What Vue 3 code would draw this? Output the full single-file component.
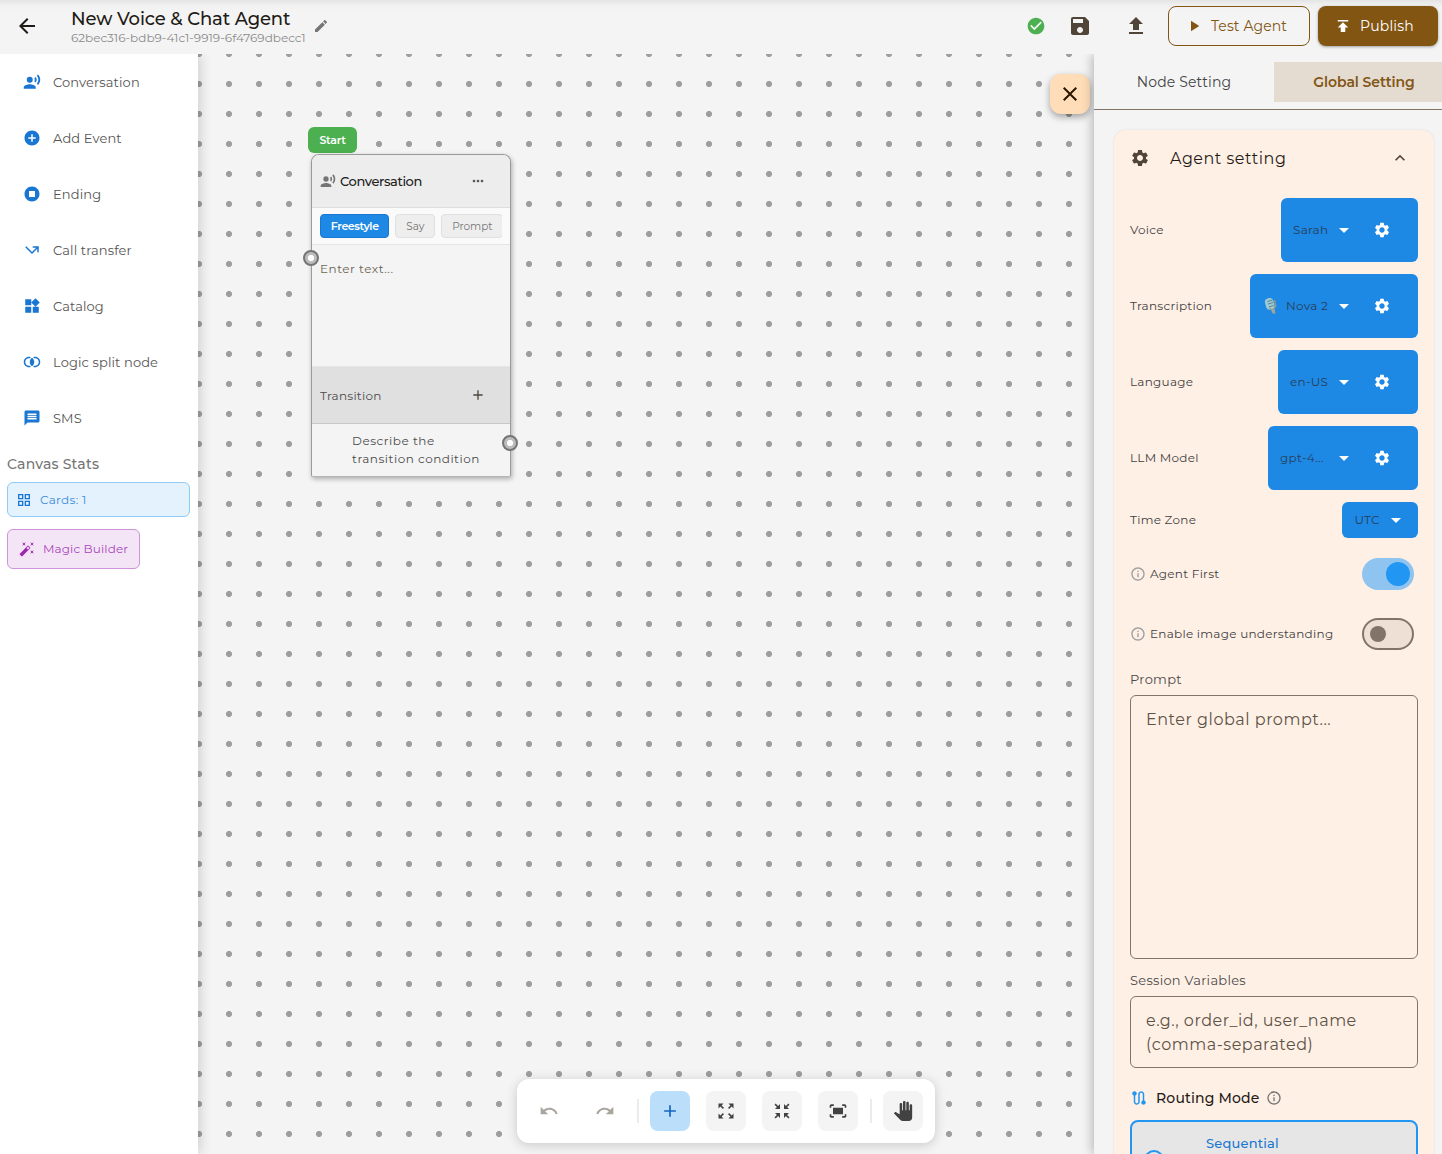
<template>
  <div class="app">
    <header class="topbar">
      <svg class="icon s24 back" viewBox="0 0 24 24"><path :d="icons.back" /></svg>
      <div class="titles">
        <div class="title">New Voice &amp; Chat Agent</div>
        <div class="agent-id">62bec316-bdb9-41c1-9919-6f4769dbecc1</div>
      </div>
      <svg class="icon s16 edit" viewBox="0 0 24 24"><path :d="icons.edit" /></svg>
      <div class="top-actions">
        <svg class="icon s20 saved" viewBox="0 0 24 24"><path :d="icons.check" /></svg>
        <svg class="icon s24 save" viewBox="0 0 24 24"><path :d="icons.save" /></svg>
        <svg class="icon s24 upload" viewBox="0 0 24 24"><path :d="icons.upload" /></svg>
        <button class="btn test">
          <svg class="icon s18" viewBox="0 0 24 24"><path :d="icons.play" /></svg>
          <span>Test Agent</span>
        </button>
        <button class="btn publish">
          <svg class="icon s18" viewBox="0 0 24 24"><path :d="icons.publish" /></svg>
          <span>Publish</span>
        </button>
      </div>
    </header>

    <div class="body">
      <aside class="sidebar">
        <div v-for="item in menu" :key="item.name" class="menu-item">
          <svg class="icon s18" viewBox="0 0 24 24"><path :d="icons[item.icon]" /></svg>
          <span>{{ item.name }}</span>
        </div>
        <div class="stats-title">Canvas Stats</div>
        <div class="cards-stat">
          <svg class="icon s16" viewBox="0 0 24 24"><path :d="icons.grid" /></svg>
          <span>Cards: 1</span>
        </div>
        <button class="magic">
          <svg class="icon s16" viewBox="0 0 24 24"><path :d="icons.magic" /></svg>
          <span>Magic Builder</span>
        </button>
      </aside>

      <main class="canvas">
        <div class="start">Start</div>
        <div class="node">
          <div class="node-head">
            <svg class="icon s16" viewBox="0 0 24 24"><path :d="icons.voice" /></svg>
            <span class="node-title">Conversation</span>
            <svg class="icon s16 more" viewBox="0 0 24 24"><path :d="icons.more" /></svg>
          </div>
          <div class="node-tabs">
            <div class="chips">
              <span class="chip active">Freestyle</span>
              <span class="chip say">Say</span>
              <span class="chip cut">Prompt</span>
            </div>
          </div>
          <div class="node-text">Enter text...</div>
          <div class="node-transition">
            <span>Transition</span>
            <svg class="icon s16" viewBox="0 0 24 24"><path :d="icons.add" /></svg>
          </div>
          <div class="node-condition">Describe the<br />transition condition</div>
          <i class="port in"></i>
          <i class="port out"></i>
        </div>

        <button class="close">
          <svg class="icon s24" viewBox="0 0 24 24"><path :d="icons.close" /></svg>
        </button>

        <div class="toolbar">
          <template v-for="tool in tools" :key="tool.icon">
            <i v-if="tool.split" class="divider"></i>
            <button class="tool" :class="tool.kind">
              <svg class="icon s20" viewBox="0 0 24 24"><path :d="icons[tool.icon]" /></svg>
            </button>
          </template>
        </div>
      </main>

      <aside class="panel">
        <div class="tabs">
          <div class="tab">Node Setting</div>
          <div class="tab active">Global Setting</div>
        </div>
        <section class="settings">
          <div class="settings-head">
            <svg class="icon s20" viewBox="0 0 24 24"><path :d="icons.settings" /></svg>
            <span class="settings-title">Agent setting</span>
            <svg class="icon s20" viewBox="0 0 24 24"><path :d="icons.less" /></svg>
          </div>

          <div v-for="row in rows" :key="row.label" class="row">
            <span class="label">{{ row.label }}</span>
            <div class="select" :class="{ small: !row.gear }" :style="{ width: row.width + 'px' }">
              <svg v-if="row.mic" class="mic" viewBox="0 0 14 18">
                <rect x="1.5" y="1" width="8.5" height="11.5" rx="3.5" transform="rotate(-14 6 7)" fill="#9ccbd6" />
                <path d="M3.5 4.5l5-1.5M4 7l5-1.5M5 10l4.5-1.5" stroke="#48707c" stroke-width="0.8" />
                <path d="M10.5 3l1.3 6-2.8 4-4-1.5" fill="none" stroke="#a89878" stroke-width="1.2" />
                <path d="M7 12.5l3.500-.5 1 4.500H8.500z" fill="#a0a69c" />
              </svg>
              <span class="value">{{ row.value }}</span>
              <svg class="icon s24" viewBox="0 0 24 24"><path :d="icons.down" /></svg>
              <span v-if="row.gear" class="gear">
                <svg class="icon s18" viewBox="0 0 24 24"><path :d="icons.settings" /></svg>
              </span>
            </div>
          </div>

          <div class="switch-row">
            <svg class="icon s16 info" viewBox="0 0 24 24"><path :d="icons.info" /></svg>
            <span class="label">Agent First</span>
            <span class="switch on"><i></i></span>
          </div>
          <div class="switch-row">
            <svg class="icon s16 info" viewBox="0 0 24 24"><path :d="icons.info" /></svg>
            <span class="label">Enable image understanding</span>
            <span class="switch"><i></i></span>
          </div>

          <div class="field-label">Prompt</div>
          <div class="field prompt">Enter global prompt...</div>
          <div class="field-label session-label">Session Variables</div>
          <div class="field session">e.g., order_id, user_name<br />(comma-separated)</div>

          <div class="routing">
            <svg class="icon s18 route" viewBox="0 0 24 24"><path :d="icons.route" /></svg>
            <span>Routing Mode</span>
            <svg class="icon s16 info-dark" viewBox="0 0 24 24"><path :d="icons.info" /></svg>
          </div>
          <div class="mode">
            <i class="radio"></i>
            <span>Sequential</span>
          </div>
        </section>
      </aside>
    </div>
  </div>
</template>

<script setup>
const disc = 'M12 2C6.48 2 2 6.48 2 12s4.48 10 10 10 10-4.48 10-10S17.52 2 12 2z'

const icons = {
  back: 'M20 11H7.83l5.59-5.59L12 4l-8 8 8 8 1.41-1.41L7.83 13H20v-2z',
  edit: 'M3 17.25V21h3.75L17.81 9.94l-3.75-3.75L3 17.25zM20.71 7.04c.39-.39.39-1.02 0-1.41l-2.34-2.34c-.39-.39-1.02-.39-1.41 0l-1.83 1.83 3.75 3.75 1.83-1.83z',
  check: disc + 'm-2 15l-5-5 1.41-1.41L10 14.17l7.59-7.59L19 8l-9 9z',
  save: 'M17 3H5c-1.11 0-2 .9-2 2v14c0 1.1.89 2 2 2h14c1.1 0 2-.9 2-2V7l-4-4zm-5 16c-1.66 0-3-1.34-3-3s1.34-3 3-3 3 1.34 3 3-1.34 3-3 3zm3-10H5V5h10v4z',
  upload: 'M9 16h6v-6h4l-7-7-7 7h4zm-4 2h14v2H5z',
  play: 'M8 5v14l11-7z',
  publish: 'M5 4v2h14V4H5zm0 10h4v6h6v-6h4l-7-7-7 7z',
  voice: 'M9 5a4 4 0 1 0 0 8 4 4 0 1 0 0-8zM9 15c-2.67 0-8 1.34-8 4v2h16v-2c0-2.66-5.33-4-8-4zm7.76-9.64l-1.68 1.69c.84 1.18.84 2.71 0 3.89l1.68 1.69c2.02-2.02 2.02-5.07 0-7.27zM20.07 2l-1.63 1.63c2.77 3.02 2.77 7.56 0 10.74L20.07 16c3.9-3.89 3.91-9.95 0-14z',
  event: disc + 'm5 11h-4v4h-2v-4H7v-2h4V7h2v4h4v2z',
  ending: disc + 'm4 14H8V8h8v8z',
  transfer: 'M3 8.41l9 9 7-7V15h2V7h-8v2h4.59L12 14.59 4.41 7 3 8.41z',
  catalog: 'M13 13v8h8v-8h-8zM3 21h8v-8H3v8zM3 3v8h8V3H3zm13.66-1.31L11 7.34 16.66 13l5.66-5.66-5.66-5.65z',
  split: 'M9.04 16.87c-.33.08-.68.13-1.04.13-2.76 0-5-2.24-5-5s2.24-5 5-5c.36 0 .71.05 1.04.13.39-.56.88-1.12 1.49-1.63C9.75 5.19 8.9 5 8 5c-3.86 0-7 3.14-7 7s3.14 7 7 7c.9 0 1.75-.19 2.53-.5-.61-.51-1.1-1.07-1.49-1.63zM16 5c-.9 0-1.75.19-2.53.5.61.51 1.1 1.07 1.49 1.63.33-.08.68-.13 1.04-.13 2.76 0 5 2.24 5 5s-2.24 5-5 5c-.36 0-.71-.05-1.04-.13-.39.56-.88 1.12-1.49 1.63.78.31 1.63.5 2.53.5 3.86 0 7-3.14 7-7s-3.14-7-7-7zM12 6.26c-1.8 1.1-3 3.3-3 5.74s1.2 4.64 3 5.74c1.8-1.1 3-3.3 3-5.74s-1.2-4.64-3-5.74z',
  sms: 'M20 2H4c-1.1 0-1.99.9-1.99 2L2 22l4-4h14c1.1 0 2-.9 2-2V4c0-1.1-.9-2-2-2zm-2 12H6v-2h12v2zm0-3H6V9h12v2zm0-3H6V6h12v2z',
  grid: 'M3 3v8h8V3H3zm6 6H5V5h4v4zm-6 4v8h8v-8H3zm6 6H5v-4h4v4zm4-16v8h8V3h-8zm6 6h-4V5h4v4zm-6 4v8h8v-8h-8zm6 6h-4v-4h4v4z',
  magic: 'M7.5 5.6L10 7 8.6 4.5 10 2 7.5 3.4 5 2l1.4 2.5L5 7zm12 9.8L17 14l1.4 2.5L17 19l2.5-1.4L22 19l-1.4-2.5L22 14zM22 2l-2.5 1.4L17 2l1.4 2.5L17 7l2.5-1.4L22 7l-1.4-2.5zm-7.63 5.29c-.39-.39-1.02-.39-1.41 0L1.29 18.96c-.39.39-.39 1.02 0 1.41l2.34 2.34c.39.39 1.02.39 1.41 0L16.7 11.05c.39-.39.39-1.02 0-1.41l-2.33-2.35zm-1.03 5.49l-2.12-2.12 2.44-2.44 2.12 2.12-2.44 2.44z',
  more: 'M6 10c-1.1 0-2 .9-2 2s.9 2 2 2 2-.9 2-2-.9-2-2-2zm12 0c-1.1 0-2 .9-2 2s.9 2 2 2 2-.9 2-2-.9-2-2-2zm-6 0c-1.1 0-2 .9-2 2s.9 2 2 2 2-.9 2-2-.9-2-2-2z',
  add: 'M19 13h-6v6h-2v-6H5v-2h6V5h2v6h6v2z',
  close: 'M19 6.41L17.59 5 12 10.59 6.41 5 5 6.41 10.59 12 5 17.59 6.41 19 12 13.41 17.59 19 19 17.59 13.41 12z',
  settings: 'M19.14 12.94c.04-.3.06-.61.06-.94 0-.32-.02-.64-.07-.94l2.03-1.58c.18-.14.23-.41.12-.61l-1.92-3.32c-.12-.22-.37-.29-.59-.22l-2.39.96c-.5-.38-1.03-.7-1.62-.94l-.36-2.54c-.04-.24-.24-.41-.48-.41h-3.84c-.24 0-.43.17-.47.41l-.36 2.54c-.59.24-1.13.57-1.62.94l-2.39-.96c-.22-.08-.47 0-.59.22L2.74 8.87c-.12.21-.08.47.12.61l2.03 1.58c-.05.3-.09.63-.09.94s.02.64.07.94l-2.03 1.58c-.18.14-.23.41-.12.61l1.92 3.32c.12.22.37.29.59.22l2.39-.96c.5.38 1.03.7 1.62.94l.36 2.54c.05.24.24.41.48.41h3.84c.24 0 .44-.17.47-.41l.36-2.54c.59-.24 1.13-.56 1.62-.94l2.39.96c.22.08.47 0 .59-.22l1.92-3.32c.12-.22.07-.47-.12-.61l-2.01-1.58zM12 15.6c-1.98 0-3.6-1.62-3.6-3.6s1.62-3.6 3.6-3.6 3.6 1.62 3.6 3.6-1.62 3.6-3.6 3.6z',
  less: 'M12 8l-6 6 1.41 1.41L12 10.83l4.59 4.58L18 14z',
  down: 'M7 10l5 5 5-5z',
  info: 'M11 7h2v2h-2zm0 4h2v6h-2zm1-9C6.48 2 2 6.48 2 12s4.48 10 10 10 10-4.48 10-10S17.52 2 12 2zm0 18c-4.41 0-8-3.59-8-8s3.59-8 8-8 8 3.59 8 8-3.59 8-8 8z',
  route: 'M19 15.18V7c0-2.21-1.79-4-4-4s-4 1.79-4 4v10c0 1.1-.9 2-2 2s-2-.9-2-2V8.82C8.16 8.4 9 7.3 9 6c0-1.66-1.34-3-3-3S3 4.34 3 6c0 1.3.84 2.4 2 2.82V17c0 2.21 1.79 4 4 4s4-1.79 4-4V7c0-1.1.9-2 2-2s2 .9 2 2v8.18c-1.16.41-2 1.51-2 2.82 0 1.66 1.34 3 3 3s3-1.34 3-3c0-1.3-.84-2.4-2-2.82z',
  undo: 'M12.5 8c-2.65 0-5.05.99-6.9 2.6L2 7v9h9l-3.62-3.62c1.39-1.16 3.16-1.88 5.12-1.88 3.54 0 6.55 2.31 7.6 5.5l2.37-.78C21.08 11.03 17.15 8 12.5 8z',
  redo: 'M18.4 10.6C16.55 8.99 14.15 8 11.5 8c-4.65 0-8.58 3.03-9.96 7.22L3.9 16c1.05-3.19 4.05-5.5 7.6-5.5 1.95 0 3.73.72 5.12 1.88L13 16h9V7l-3.6 3.6z',
  expand: 'M15 3l2.3 2.3-2.89 2.87 1.42 1.42L18.7 6.7 21 9V3zM3 9l2.3-2.3 2.87 2.89 1.42-1.42L6.7 5.3 9 3H3zm6 12l-2.3-2.3 2.89-2.87-1.42-1.42L5.3 17.3 3 15v6zm12-6l-2.3 2.3-2.87-2.89-1.42 1.42 2.89 2.87L15 21h6z',
  shrink: 'M9.6 3.6L7.3 5.9 4.43 3.01 3.01 4.43 5.9 7.3 3.6 9.6h6zM14.4 3.6l2.3 2.3 2.87-2.89 1.42 1.42L18.1 7.3l2.3 2.3h-6zM9.6 20.4l-2.3-2.3-2.87 2.89-1.42-1.42L5.9 16.7l-2.3-2.3h6zM14.4 20.4l2.3-2.3 2.87 2.89 1.42-1.42-2.89-2.87 2.3-2.3h-6z',
  fit: 'M17 4h3c1.1 0 2 .9 2 2v2h-2V6h-3V4zM4 8V6h3V4H4c-1.1 0-2 .9-2 2v2h2zm16 8v2h-3v2h3c1.1 0 2-.9 2-2v-2h-2zM7 18H4v-2H2v2c0 1.1.9 2 2 2h3v-2zM18 8H6v8h12V8z',
  hand: 'M23 5.5V20c0 2.2-1.8 4-4 4h-7.3c-1.08 0-2.1-.43-2.85-1.19L1 14.83s1.26-1.23 1.3-1.25c.22-.19.49-.29.79-.29.22 0 .42.06.6.16.04.01 4.31 2.46 4.31 2.46V4c0-.83.67-1.5 1.5-1.5S11 3.17 11 4v7h1V1.5c0-.83.67-1.5 1.5-1.5S15 .67 15 1.5V11h1V2.5c0-.83.67-1.5 1.5-1.5s1.5.67 1.5 1.5V11h1V5.5c0-.83.67-1.5 1.5-1.5s1.5.67 1.5 1.5z'
}

const menu = [
  { name: 'Conversation', icon: 'voice' },
  { name: 'Add Event', icon: 'event' },
  { name: 'Ending', icon: 'ending' },
  { name: 'Call transfer', icon: 'transfer' },
  { name: 'Catalog', icon: 'catalog' },
  { name: 'Logic split node', icon: 'split' },
  { name: 'SMS', icon: 'sms' }
]

const tools = [
  { icon: 'undo', kind: 'plain' },
  { icon: 'redo', kind: 'plain' },
  { icon: 'add', kind: 'primary', split: true },
  { icon: 'expand' },
  { icon: 'shrink' },
  { icon: 'fit' },
  { icon: 'hand', split: true }
]

const rows = [
  { label: 'Voice', value: 'Sarah', width: 137, gear: true },
  { label: 'Transcription', value: 'Nova 2', width: 168, gear: true, mic: true },
  { label: 'Language', value: 'en-US', width: 140, gear: true },
  { label: 'LLM Model', value: 'gpt-4...', width: 150, gear: true },
  { label: 'Time Zone', value: 'UTC', width: 75.6, gear: false }
]
</script>

<style>
body {
  overflow: hidden;
}
</style>

<style scoped>
.app {
  width: 1442px;
  height: 1154px;
  overflow: hidden;
  display: flex;
  flex-direction: column;
  background: #f4f4f4;
  color: #1f1b16;
  font-family: Montserrat, Inter, sans-serif;
  font-size: 13px;
  letter-spacing: 0.12px;
}

.app * {
  box-sizing: border-box;
}

button {
  font: inherit;
  letter-spacing: inherit;
  border: 0;
  padding: 0;
}

.icon {
  display: block;
  flex: none;
  fill: currentColor;
}

.s16 {
  width: 16px;
  height: 16px;
}

.s18 {
  width: 18px;
  height: 18px;
}

.s20 {
  width: 20px;
  height: 20px;
}

.s24 {
  width: 24px;
  height: 24px;
}

.topbar {
  flex: none;
  height: 54px;
  display: flex;
  align-items: center;
  padding: 0 4px 2px 15px;
  background: linear-gradient(#e4e4e4, #f0f0f0 5px, #f4f4f4 11px);
}

.titles {
  width: 235px;
  margin-left: 32px;
  white-space: nowrap;
}

.title {
  font-size: 18px;
  line-height: 22px;
  font-weight: 500;
  letter-spacing: -0.14px;
}

.agent-id {
  font-size: 12px;
  line-height: 15px;
  color: #8a8a8a;
  letter-spacing: 0;
}

.edit {
  margin-left: 7px;
  color: #757575;
}

.top-actions {
  display: flex;
  align-items: center;
  margin-left: auto;
  color: #4f4539;
}

.saved {
  color: #4caf50;
  margin-right: 22px;
}

.save {
  margin-right: 32px;
}

.upload {
  margin-right: 20px;
}

.btn {
  height: 40px;
  display: flex;
  align-items: center;
  border-radius: 8px;
  font-size: 14px;
  letter-spacing: 0.1px;
}

.test {
  width: 142px;
  padding-left: 16px;
  gap: 8px;
  margin-right: 8px;
  border: 1px solid #825513;
  color: #825513;
  background: transparent;
}

.publish {
  width: 120px;
  padding-left: 16px;
  gap: 8px;
  background: #825513;
  color: #fff;
  letter-spacing: 0.15px;
  box-shadow: 0 1px 3px rgba(0, 0, 0, 0.35);
}

.body {
  flex: 1;
  min-height: 0;
  display: flex;
}

.sidebar {
  position: relative;
  z-index: 2;
  flex: none;
  width: 198px;
  background: #fff;
  box-shadow: 2px 0 12px rgba(0, 0, 0, 0.16);
  clip-path: inset(0 -20px 0 0);
}

.menu-item {
  height: 56px;
  display: flex;
  align-items: center;
  gap: 12px;
  padding-left: 23px;
  color: #1976d2;
}

.menu-item span {
  padding-bottom: 1px;
  color: #555;
}

.stats-title {
  padding-left: 7px;
  margin-top: 10px;
  line-height: 17px;
  font-size: 14px;
  font-weight: 500;
  letter-spacing: 0.2px;
  color: #757575;
}

.cards-stat {
  display: flex;
  align-items: center;
  width: 183px;
  height: 35px;
  margin: 9px 0 12px 7px;
  padding-left: 8px;
  gap: 8px;
  border: 1px solid #90caf9;
  border-radius: 6px;
  background: #e3f2fd;
  color: #1976d2;
  font-size: 12px;
  letter-spacing: 0.3px;
}

.cards-stat span {
  color: #3d8ad8;
}

.magic {
  display: flex;
  align-items: center;
  width: 133px;
  height: 40px;
  margin-left: 7px;
  padding: 0 0 1px 11px;
  gap: 8px;
  border: 1px solid #ce93d8;
  border-radius: 6px;
  background: #f3e5f5;
  color: #9c27b0;
  font-size: 12px;
  letter-spacing: 0.12px;
}

.magic span {
  color: #ab47bc;
}

.canvas {
  position: relative;
  flex: 1;
  min-width: 0;
  overflow: hidden;
  background: radial-gradient(circle, #9e9e9e 2.7px, transparent 3.4px) -14px -15px / 30px 30px #f4f4f4;
}

.start {
  position: absolute;
  left: 110px;
  top: 73px;
  width: 49px;
  height: 26px;
  line-height: 26px;
  text-align: center;
  border-radius: 6px;
  background: #4caf50;
  color: #fff;
  font-size: 11px;
  font-weight: 600;
  letter-spacing: -0.3px;
}

.node {
  position: absolute;
  left: 113px;
  top: 100px;
  width: 200px;
  height: 323px;
  border: 1px solid #9a9a9a;
  border-bottom-color: #b5b5b5;
  border-radius: 8px 8px 2px 2px;
  background: #f4f4f4;
  box-shadow: 1px 2px 5px rgba(0, 0, 0, 0.3);
}

.node-head {
  height: 53px;
  display: flex;
  align-items: center;
  padding: 0 24px 0 8px;
  border-bottom: 1px solid #ddd;
  border-radius: 7px 7px 0 0;
  background: #ededed;
  color: #757575;
}

.node-title {
  margin-left: 4px;
  font-size: 13px;
  font-weight: 500;
  letter-spacing: -0.4px;
  color: #212121;
}

.more {
  margin-left: auto;
  color: #555;
}

.node-tabs {
  height: 37px;
  padding: 6px 8px;
  background: #fafafa;
  border-bottom: 1px solid #e6e6e6;
}

.chips {
  display: flex;
  gap: 6px;
  overflow: hidden;
}

.chip {
  flex: none;
  height: 24px;
  line-height: 23px;
  text-align: center;
  border: 1px solid #e0e0e0;
  border-radius: 4px;
  background: #eee;
  color: #757575;
  font-size: 10.5px;
  letter-spacing: 0;
}

.chip.active {
  width: 69.4px;
  border-color: #1976d2;
  background: #1e88e5;
  color: #fff;
  font-size: 11px;
  font-weight: 600;
  letter-spacing: -0.4px;
}

.chip.say {
  width: 40px;
}

.chip.cut {
  width: 62px;
}

.node-text {
  height: 121px;
  padding: 16px 8px;
  font-size: 12px;
  line-height: 16px;
  letter-spacing: 0.52px;
  color: #6d6456;
}

.node-transition {
  height: 58px;
  display: flex;
  align-items: center;
  justify-content: space-between;
  padding: 0 24px 0 8px;
  border-top: 1px solid #e6e6e6;
  border-bottom: 1px solid #c8c8c8;
  background: #e0e0e0;
  color: #4f4539;
  font-size: 12px;
  letter-spacing: 0.27px;
}

.node-transition span,
.node-condition {
  color: #4c4c4c;
}

.node-condition {
  padding: 8px 0 0 40px;
  font-size: 12px;
  line-height: 18px;
  letter-spacing: 0.52px;
  white-space: nowrap;
}

.port {
  position: absolute;
  width: 16px;
  height: 16px;
  border: 2px solid #757575;
  border-radius: 50%;
  background: radial-gradient(circle, #fff 2.8px, #bdbdbd 3.4px);
}

.port.in {
  left: -9px;
  top: 95px;
}

.port.out {
  right: -8px;
  top: 280px;
}

.close {
  position: absolute;
  right: 4px;
  top: 20px;
  width: 40px;
  height: 40px;
  display: grid;
  place-items: center;
  border-radius: 11px;
  background: #ffddb9;
  color: #2b1700;
  box-shadow: 0 3px 7px rgba(0, 0, 0, 0.35);
}

.toolbar {
  position: absolute;
  left: 319px;
  top: 1025px;
  height: 64px;
  display: flex;
  align-items: center;
  padding: 0 12px;
  border-radius: 12px;
  background: #fff;
  box-shadow: 0 2px 12px rgba(0, 0, 0, 0.18);
}

.tool {
  width: 40px;
  height: 40px;
  display: grid;
  place-items: center;
  border-radius: 8px;
  background: #f4f4f4;
  color: #424242;
}

.tool + .tool {
  margin-left: 16px;
}

.tool.plain {
  background: none;
  color: #aaa59f;
}

.tool.primary {
  background: #bbdefb;
  color: #1565c0;
}

.divider {
  width: 2px;
  height: 24px;
  margin: 0 11.5px;
  background: #ebebeb;
}

.panel {
  position: relative;
  z-index: 2;
  flex: none;
  width: 348px;
  background: #f4f4f4;
  box-shadow: -2px 0 10px rgba(0, 0, 0, 0.25);
  clip-path: inset(0 0 0 -20px);
}

.tabs {
  width: 360px;
  height: 56px;
  display: flex;
  align-items: center;
  border-bottom: 1px solid #837468;
}

.tab {
  width: 180px;
  height: 40px;
  line-height: 40px;
  text-align: center;
  font-size: 14px;
  color: #444;
  letter-spacing: 0.15px;
}

.tab.active {
  background: #e4dcd1;
  color: #825513;
  font-weight: 600;
  letter-spacing: -0.08px;
}

.settings {
  width: 320px;
  height: 1100px;
  margin: 20px 0 0 20px;
  padding: 0 16px;
  border-radius: 12px;
  background: #fff0e6;
  box-shadow: 0 0 2px rgba(0, 0, 0, 0.12);
}

.settings-head {
  height: 56px;
  display: flex;
  align-items: center;
  padding-right: 8px;
  color: #4f4539;
}

.settings-title {
  flex: 1;
  margin-left: 20px;
  font-size: 16px;
  letter-spacing: 0.5px;
  color: #1f1b16;
}

.label {
  padding-bottom: 1px;
  color: #424242;
  font-size: 12px;
  letter-spacing: 0.27px;
}

.row {
  display: flex;
  align-items: center;
  justify-content: space-between;
  margin-top: 12px;
}

.select {
  height: 64px;
  display: flex;
  align-items: center;
  padding: 0 12px;
  border-radius: 6px;
  background: #1e88e5;
  color: #fff;
}

.select.small {
  height: 36px;
  padding-right: 10px;
}

.value {
  flex: 1;
  padding-bottom: 1px;
  font-size: 12px;
  letter-spacing: 0.27px;
  color: #263f58;
  white-space: nowrap;
}

.mic {
  width: 14px;
  height: 18px;
  margin: 0 8px 0 2px;
}

.gear {
  width: 48px;
  margin-left: 2px;
  display: grid;
  place-items: center;
}

.switch-row {
  height: 32px;
  display: flex;
  align-items: center;
  margin-top: 20px;
  padding-right: 4px;
}

.switch-row + .switch-row {
  margin-top: 28px;
}

.info {
  color: #9e9e9e;
  margin-right: 4px;
}

.switch {
  width: 52px;
  height: 32px;
  margin-left: auto;
  display: flex;
  align-items: center;
  padding: 0 6px;
  border: 2px solid #837468;
  border-radius: 16px;
  background: #efe0d5;
}

.switch i {
  width: 16px;
  height: 16px;
  border-radius: 50%;
  background: #837468;
}

.switch.on {
  justify-content: flex-end;
  padding: 0 4px;
  border: 0;
  background: #90c4f0;
}

.switch.on i {
  width: 24px;
  height: 24px;
  background: #2196f3;
}

.field-label {
  margin-top: 21px;
  line-height: 16px;
  letter-spacing: 0.28px;
  color: #4a4a4a;
}

.session-label {
  margin-top: 13px;
}

.field {
  margin-top: 8px;
  padding: 12px 15px 0;
  border: 1px solid #837468;
  border-radius: 6px;
  font-size: 16px;
  line-height: 24px;
  letter-spacing: 0.52px;
  color: #5d5347;
  white-space: nowrap;
}

.prompt {
  height: 264px;
}

.session {
  height: 72px;
}

.routing {
  height: 20px;
  display: flex;
  align-items: center;
  margin-top: 20px;
  gap: 8px;
  font-size: 14px;
  font-weight: 500;
  letter-spacing: 0.16px;
}

.route {
  color: #2196f3;
}

.info-dark {
  margin-left: -2px;
  color: #757575;
}

.mode {
  height: 80px;
  display: flex;
  align-items: flex-start;
  margin-top: 12px;
  border: 2px solid #2196f3;
  border-radius: 8px;
  background: #e6e6e6;
  color: #1976d2;
  font-size: 13px;
  font-weight: 500;
  letter-spacing: 0.2px;
}

.mode span {
  margin: 13px 0 0 42px;
  line-height: 16px;
}

.radio {
  width: 20px;
  height: 20px;
  margin: 28px 0 0 12px;
  border: 2px solid #2196f3;
  border-radius: 50%;
}
</style>
